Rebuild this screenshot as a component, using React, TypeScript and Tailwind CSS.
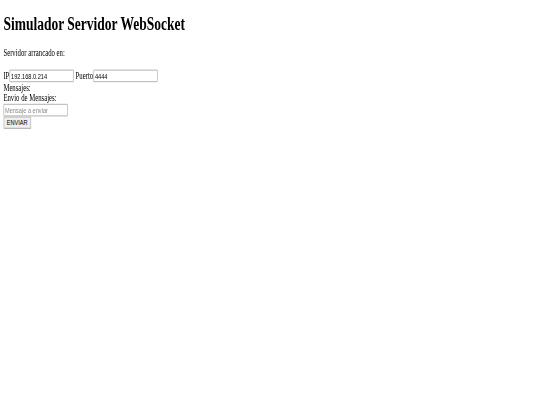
import { useState } from "react";

// The page is laid out at its natural 1280px width and then squeezed into the
// 540x405 viewport, like the reference capture.
export default function App() {
  const [ip, setIp] = useState("192.168.0.214");
  const [port, setPort] = useState("4444");
  const [msg, setMsg] = useState("");

  const inputCls =
    "w-[153px] h-[21px] px-[2px] py-[1px] border-2 border-[#c2c2c2] rounded-[2px] bg-white text-[13.33px] text-black font-['Liberation_Sans',Arial,sans-serif] align-baseline placeholder:text-[#8a8a8a]";

  return (
    <div className="w-[540px] h-[405px] overflow-hidden bg-white">
      <div className="flow-root w-[1280px] h-[675px] origin-top-left scale-x-[0.421875] scale-y-[0.6] px-2 text-[16px] leading-[normal] text-black font-['Liberation_Serif','Times_New_Roman',serif]">
        <h1 className="my-[21.44px] text-[32px] font-bold leading-[normal]">
          Simulador Servidor WebSocket
        </h1>
        <div>Servidor arrancado en:</div>
        <br />
        <div>
          IP
          <input
            className={inputCls}
            value={ip}
            onChange={(e) => setIp(e.target.value)}
          />{" "}
          Puerto
          <input
            className={inputCls}
            value={port}
            onChange={(e) => setPort(e.target.value)}
          />
        </div>
        <div>Mensajes:</div>
        <div>Envio de Mensajes:</div>
        <div>
          <input
            className={inputCls}
            placeholder="Mensaje a enviar"
            value={msg}
            onChange={(e) => setMsg(e.target.value)}
          />
        </div>
        <button className="h-[21px] px-[6px] py-[1px] border-2 border-[#b8b8b8] rounded-[2px] bg-[#efefef] text-[13.33px] text-black font-['Liberation_Sans',Arial,sans-serif]">
          ENVIAR
        </button>
      </div>
    </div>
  );
}
